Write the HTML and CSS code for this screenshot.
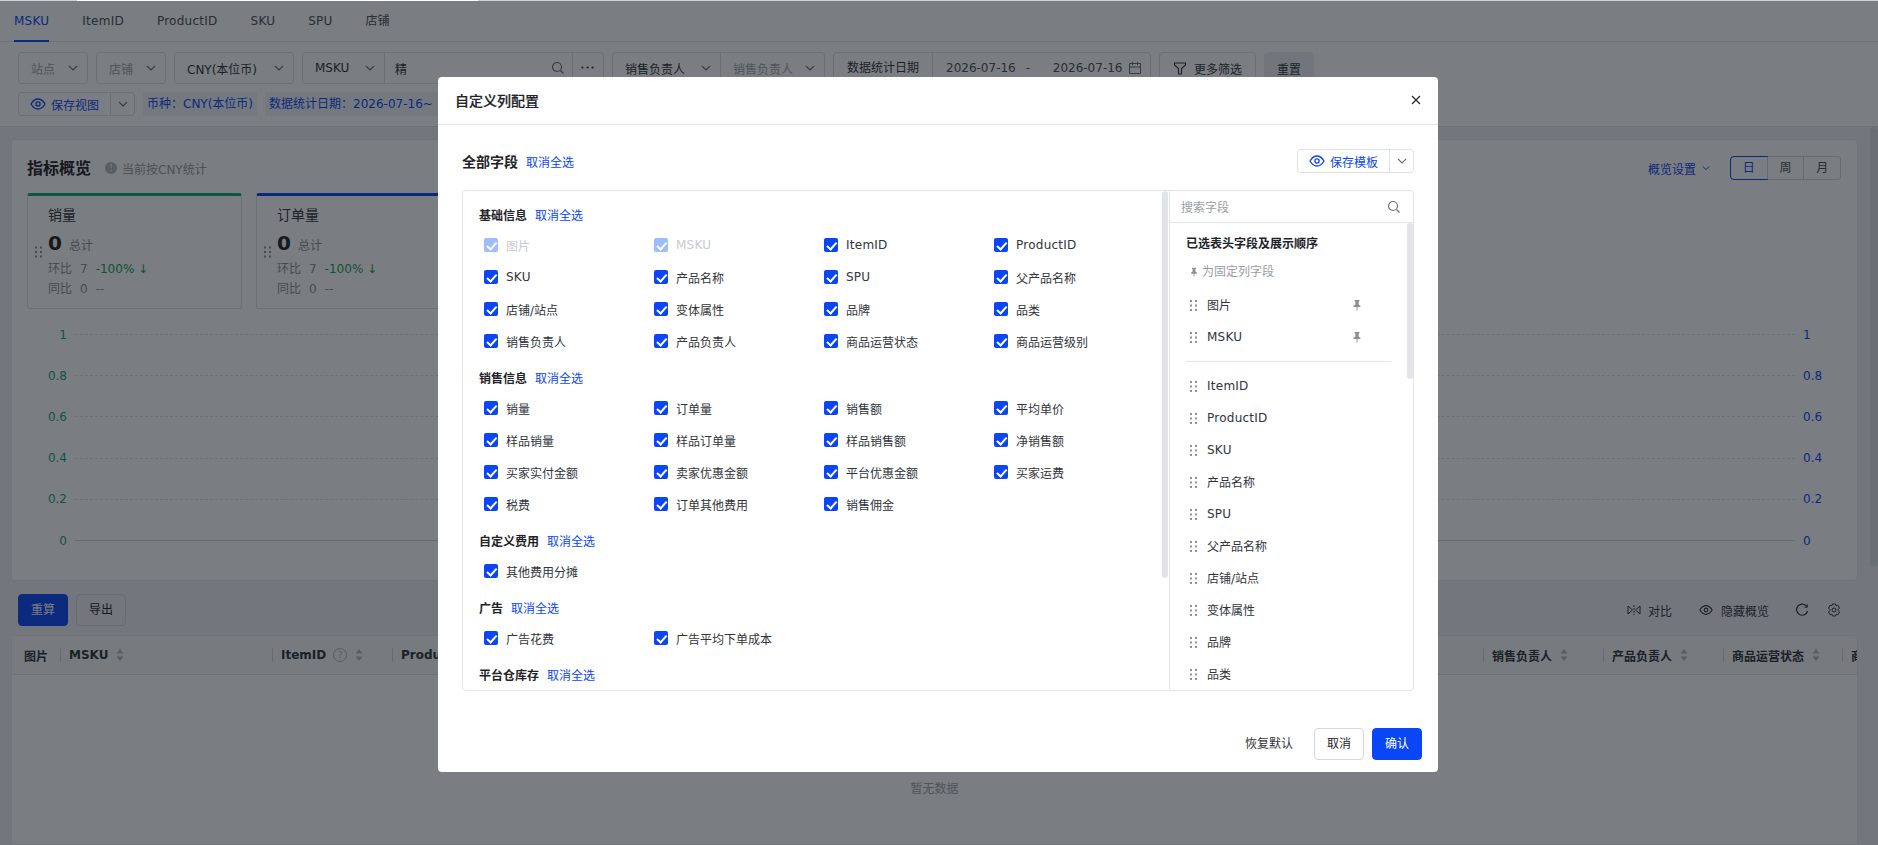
FILE: index.html
```html
<!DOCTYPE html>
<html lang="en">
<head>
  <meta charset="UTF-8" />
  <title>自定义列配置</title>
  <link rel="stylesheet" href="styles.css">
</head>
<body>
  <svg class="sprite" width="0" height="0">
    <symbol id="i-down" viewBox="0 0 12 12"><path d="M2 4l4 4 4-4" fill="none" stroke="currentColor" stroke-width="1.1"/></symbol>
    <symbol id="i-search" viewBox="0 0 14 14"><circle cx="6" cy="6" r="4.5" fill="none" stroke="currentColor" stroke-width="1.2"/><path d="M9.5 9.5l3 3" stroke="currentColor" stroke-width="1.2"/></symbol>
    <symbol id="i-eye" viewBox="0 0 16 16"><path d="M1 8c2-3.4 4.300-5 7-5s5 1.600 7 5c-2 3.400-4.300 5-7 5s-5-1.600-7-5z" fill="none" stroke="currentColor" stroke-width="1.300"/><circle cx="8" cy="8" r="2.100" fill="none" stroke="currentColor" stroke-width="1.300"/></symbol>
    <symbol id="i-pin" viewBox="0 0 12 12"><path d="M3.500 1h5v1l-.8.500v3L9.500 7v1h-3v3.500h-1V8h-3V7l1.800-1.500v-3L3.500 2z" fill="currentColor"/></symbol>
    <symbol id="i-grip" viewBox="0 0 7 11"><path d="M0 0h2v2H0zM5 0h2v2H5zM0 4.500h2v2H0zM5 4.500h2v2H5zM0 9h2v2H0zM5 9h2v2H5z" fill="currentColor"/></symbol>
    <symbol id="i-sort" viewBox="0 0 10 14"><path d="M5 1l3.500 4.500h-7zM5 13L1.500 8.500h7z" fill="currentColor"/></symbol>
    <symbol id="i-cal" viewBox="0 0 14 14"><path d="M1.500 2.500h11v10h-11zM1.500 6h11M4.500 1v3M9.500 1v3" fill="none" stroke="currentColor"/></symbol>
    <symbol id="i-filter" viewBox="0 0 14 14"><path d="M1.500 2h11v2L8.500 7.500V13h-3V7.500L1.500 4z" fill="none" stroke="currentColor" stroke-width="1.100"/></symbol>
  </svg>

  <div class="top-strip"></div>

  <div class="tabs">
    <span class="tab en active">MSKU</span>
    <span class="tab en">ItemID</span>
    <span class="tab en">ProductID</span>
    <span class="tab en">SKU</span>
    <span class="tab en">SPU</span>
    <span class="tab">店铺</span>
  </div>

  <div class="filters">
    <div class="filter-row">
      <div class="box sel w70 muted"><span>站点</span><svg class="ic"><use href="#i-down"/></svg></div>
      <div class="box sel w70 muted"><span>店铺</span><svg class="ic"><use href="#i-down"/></svg></div>
      <div class="box sel w120"><span>CNY(本位币)</span><svg class="ic"><use href="#i-down"/></svg></div>
      <div class="box group w302">
        <div class="sel part w82"><span>MSKU</span><svg class="ic"><use href="#i-down"/></svg></div>
        <div class="search-part"><span>精</span><svg class="ic14"><use href="#i-search"/></svg></div>
        <div class="more-part">•••</div>
      </div>
      <div class="box group w213">
        <div class="sel part w108"><span>销售负责人</span><svg class="ic"><use href="#i-down"/></svg></div>
        <div class="sel part fill muted"><span>销售负责人</span><svg class="ic"><use href="#i-down"/></svg></div>
      </div>
      <div class="box group w318">
        <div class="date-label">数据统计日期</div>
        <div class="date-range"><span>2026-07-16</span><span class="dash">-</span><span>2026-07-16</span><svg class="ic14"><use href="#i-cal"/></svg></div>
      </div>
      <div class="box btn w97"><svg class="ic14"><use href="#i-filter"/></svg>更多筛选</div>
      <div class="box btn w50 flat">重置</div>
    </div>
    <div class="filter-row small">
      <div class="box split w117">
        <div class="split-main"><svg class="ic16"><use href="#i-eye"/></svg>保存视图</div>
        <div class="split-arrow"><svg class="ic"><use href="#i-down"/></svg></div>
      </div>
      <span class="tag">币种：CNY(本位币)</span>
      <span class="tag">数据统计日期：2026-07-16~</span>
    </div>
  </div>

  <div class="main">
    <div class="panel">
      <div class="panel-head">
        <h2>指标概览</h2>
        <span class="info-dot">!</span>
        <span class="hint">当前按CNY统计</span>
        <span class="overview-set">概览设置<svg class="ic10"><use href="#i-down"/></svg></span>
        <div class="seg"><span class="on">日</span><span>周</span><span>月</span></div>
      </div>
      <div class="kpis">
        <div class="kpi green">
          <svg class="grip"><use href="#i-grip"/></svg>
          <div class="kpi-title">销量</div>
          <div class="kpi-val"><b>0</b>总计</div>
          <div class="kpi-line">环比<i>7</i><em>-100% ↓</em></div>
          <div class="kpi-line">同比<i>0</i><i>--</i></div>
        </div>
        <div class="kpi blue">
          <svg class="grip"><use href="#i-grip"/></svg>
          <div class="kpi-title">订单量</div>
          <div class="kpi-val"><b>0</b>总计</div>
          <div class="kpi-line">环比<i>7</i><em>-100% ↓</em></div>
          <div class="kpi-line">同比<i>0</i><i>--</i></div>
        </div>
      </div>
      <div class="chart">
        <div class="chart-row"><span class="y-l">1</span><span class="grid"></span><span class="y-r">1</span></div>
        <div class="chart-row"><span class="y-l">0.8</span><span class="grid"></span><span class="y-r">0.8</span></div>
        <div class="chart-row"><span class="y-l">0.6</span><span class="grid"></span><span class="y-r">0.6</span></div>
        <div class="chart-row"><span class="y-l">0.4</span><span class="grid"></span><span class="y-r">0.4</span></div>
        <div class="chart-row"><span class="y-l">0.2</span><span class="grid"></span><span class="y-r">0.2</span></div>
        <div class="chart-row"><span class="y-l">0</span><span class="grid solid"></span><span class="y-r">0</span></div>
      </div>
    </div>

    <div class="toolbar">
      <span class="tbtn primary">重算</span>
      <span class="tbtn">导出</span>
      <div class="tools">
        <span class="tool"><svg class="ic14" viewBox="0 0 14 14"><path d="M1 3v8l4.500-4zM13 3v8L8.500 7z" fill="none" stroke="currentColor"/><path d="M7 2v10" stroke="currentColor" stroke-dasharray="2 1"/></svg>对比</span>
        <span class="tool tool-b"><svg class="ic14"><use href="#i-eye"/></svg>隐藏概览</span>
        <svg class="ic14 tool-icon" viewBox="0 0 14 14"><path d="M12 3.800A5.600 5.600 0 1 0 12.600 8" fill="none" stroke="currentColor" stroke-width="1.200"/><path d="M12.300 1.300v2.900H9.500" fill="none" stroke="currentColor"/></svg>
        <svg class="ic14" viewBox="0 0 14 14"><path d="M5.400 1h3.200l.5 1.800 1.800-.5 1.600 2.700L11.200 6.400v1.200l1.300 1.400-1.600 2.700-1.800-.5L8.600 13H5.400l-.5-1.800-1.800.5L1.500 9l1.300-1.400V6.400L1.500 5l1.600-2.700 1.800.5z" fill="none" stroke="currentColor" stroke-linejoin="round"/><circle cx="7" cy="7" r="2" fill="none" stroke="currentColor"/></svg>
      </div>
    </div>

    <div class="table">
      <div class="thead">
        <div class="th first">图片</div>
        <div class="th w212"><span>MSKU</span><svg class="sort"><use href="#i-sort"/></svg></div>
        <div class="th w120"><span>ItemID</span><span class="help">?</span><svg class="sort"><use href="#i-sort"/></svg></div>
        <div class="th fill"><span>ProductID</span></div>
        <div class="th w120"><span>销售负责人</span><svg class="sort"><use href="#i-sort"/></svg></div>
        <div class="th w120"><span>产品负责人</span><svg class="sort"><use href="#i-sort"/></svg></div>
        <div class="th w119"><span>商品运营状态</span><svg class="sort"><use href="#i-sort"/></svg></div>
        <div class="th last"><span>商品运营级别</span></div>
      </div>
      <div class="empty">暂无数据</div>
    </div>
    <div class="page-scroll"></div>
  </div>

  <div class="overlay">
    <div class="dialog">
      <div class="dialog-head">
        <span class="dialog-title">自定义列配置</span>
        <svg class="close" viewBox="0 0 10 10"><path d="M1 1l8 8M9 1l-8 8" stroke="currentColor" stroke-width="1.100"/></svg>
      </div>
      <div class="dialog-body">
        <div class="all-row">
          <span class="all-title">全部字段</span>
          <a class="link">取消全选</a>
          <div class="tpl-btn">
            <div class="tpl-main"><svg class="ic16"><use href="#i-eye"/></svg>保存模板</div>
            <div class="tpl-arrow"><svg class="ic"><use href="#i-down"/></svg></div>
          </div>
        </div>
        <div class="config">
          <div class="fields">
            <div class="vbar left"></div>
            <div class="sec-title"><b>基础信息</b><a class="link">取消全选</a></div>
            <div class="check-grid">
              <label class="chk off"><span class="cb"></span>图片</label>
              <label class="chk off en"><span class="cb"></span>MSKU</label>
              <label class="chk en"><span class="cb"></span>ItemID</label>
              <label class="chk en"><span class="cb"></span>ProductID</label>
              <label class="chk en"><span class="cb"></span>SKU</label>
              <label class="chk"><span class="cb"></span>产品名称</label>
              <label class="chk en"><span class="cb"></span>SPU</label>
              <label class="chk"><span class="cb"></span>父产品名称</label>
              <label class="chk"><span class="cb"></span>店铺/站点</label>
              <label class="chk"><span class="cb"></span>变体属性</label>
              <label class="chk"><span class="cb"></span>品牌</label>
              <label class="chk"><span class="cb"></span>品类</label>
              <label class="chk"><span class="cb"></span>销售负责人</label>
              <label class="chk"><span class="cb"></span>产品负责人</label>
              <label class="chk"><span class="cb"></span>商品运营状态</label>
              <label class="chk"><span class="cb"></span>商品运营级别</label>
            </div>
            <div class="sec-title"><b>销售信息</b><a class="link">取消全选</a></div>
            <div class="check-grid">
              <label class="chk"><span class="cb"></span>销量</label>
              <label class="chk"><span class="cb"></span>订单量</label>
              <label class="chk"><span class="cb"></span>销售额</label>
              <label class="chk"><span class="cb"></span>平均单价</label>
              <label class="chk"><span class="cb"></span>样品销量</label>
              <label class="chk"><span class="cb"></span>样品订单量</label>
              <label class="chk"><span class="cb"></span>样品销售额</label>
              <label class="chk"><span class="cb"></span>净销售额</label>
              <label class="chk"><span class="cb"></span>买家实付金额</label>
              <label class="chk"><span class="cb"></span>卖家优惠金额</label>
              <label class="chk"><span class="cb"></span>平台优惠金额</label>
              <label class="chk"><span class="cb"></span>买家运费</label>
              <label class="chk"><span class="cb"></span>税费</label>
              <label class="chk"><span class="cb"></span>订单其他费用</label>
              <label class="chk"><span class="cb"></span>销售佣金</label>
            </div>
            <div class="sec-title"><b>自定义费用</b><a class="link">取消全选</a></div>
            <div class="check-grid">
              <label class="chk"><span class="cb"></span>其他费用分摊</label>
            </div>
            <div class="sec-title"><b>广告</b><a class="link">取消全选</a></div>
            <div class="check-grid">
              <label class="chk"><span class="cb"></span>广告花费</label>
              <label class="chk"><span class="cb"></span>广告平均下单成本</label>
            </div>
            <div class="sec-title"><b>平台仓库存</b><a class="link">取消全选</a></div>
          </div>
          <div class="picked">
            <div class="picked-search"><span>搜索字段</span><svg class="ic14"><use href="#i-search"/></svg></div>
            <div class="picked-list">
              <div class="vbar right"></div>
              <div class="picked-title">已选表头字段及展示顺序</div>
              <div class="picked-note"><svg class="ic10"><use href="#i-pin"/></svg>为固定列字段</div>
              <div class="pick-row"><svg class="grip-s"><use href="#i-grip"/></svg><span>图片</span><svg class="pin"><use href="#i-pin"/></svg></div>
              <div class="pick-row en"><svg class="grip-s"><use href="#i-grip"/></svg><span>MSKU</span><svg class="pin"><use href="#i-pin"/></svg></div>
              <div class="picked-sep"></div>
              <div class="pick-row en"><svg class="grip-s"><use href="#i-grip"/></svg><span>ItemID</span></div>
              <div class="pick-row en"><svg class="grip-s"><use href="#i-grip"/></svg><span>ProductID</span></div>
              <div class="pick-row en"><svg class="grip-s"><use href="#i-grip"/></svg><span>SKU</span></div>
              <div class="pick-row"><svg class="grip-s"><use href="#i-grip"/></svg><span>产品名称</span></div>
              <div class="pick-row en"><svg class="grip-s"><use href="#i-grip"/></svg><span>SPU</span></div>
              <div class="pick-row"><svg class="grip-s"><use href="#i-grip"/></svg><span>父产品名称</span></div>
              <div class="pick-row"><svg class="grip-s"><use href="#i-grip"/></svg><span>店铺/站点</span></div>
              <div class="pick-row"><svg class="grip-s"><use href="#i-grip"/></svg><span>变体属性</span></div>
              <div class="pick-row"><svg class="grip-s"><use href="#i-grip"/></svg><span>品牌</span></div>
              <div class="pick-row"><svg class="grip-s"><use href="#i-grip"/></svg><span>品类</span></div>
            </div>
          </div>
        </div>
      </div>
      <div class="dialog-foot">
        <span class="foot-text">恢复默认</span>
        <span class="foot-btn">取消</span>
        <span class="foot-btn ok">确认</span>
      </div>
    </div>
  </div>
</body>
</html>
```

FILE: styles.css
```css
* { box-sizing: border-box; margin: 0; padding: 0; }
html, body { height: 100%; }
body {
  font-family: "DejaVu Sans", "Noto Sans CJK SC", sans-serif;
  font-size: 12px;
  color: #1f2329;
  background: #fff;
  display: flex;
  flex-direction: column;
  height: 845px;
  overflow: hidden;
  position: relative;
}
.sprite { position: absolute; }
svg { display: block; flex-shrink: 0; }
.ic { width: 12px; height: 12px; color: #6b6f78; }
.ic10 { width: 10px; height: 10px; }
.ic14 { width: 14px; height: 14px; }
.ic16 { width: 16px; height: 16px; }
.en { letter-spacing: 0.25px; }

.top-strip {
  height: 1px;
  flex-shrink: 0;
  background: linear-gradient(90deg, #cfd1d4 77px, #fff 77px, #fff 478px, #cfd1d4 478px);
}

/* tabs */
.tabs {
  display: flex;
  gap: 33px;
  height: 41px;
  padding-left: 14px;
  border-bottom: 1px solid #e3e5ea;
  flex-shrink: 0;
}
.tab { line-height: 40px; height: 41px; color: #4c5058; }
.tab.active { color: #0a46f5; border-bottom: 2px solid #0a46f5; }

/* filters */
.filters {
  padding: 10px 18px;
  border-bottom: 1px solid #e3e5ea;
  display: flex;
  flex-direction: column;
  gap: 8px;
  flex-shrink: 0;
}
.filter-row { display: flex; gap: 8px; height: 32px; }
.filter-row.small { height: 24px; }
.box {
  border: 1px solid #dfe1e6;
  border-radius: 4px;
  display: flex;
  align-items: center;
  color: #30343b;
  flex-shrink: 0;
}
.sel { justify-content: space-between; padding: 0 8px 0 12px; }
.part { height: 100%; display: flex; align-items: center; border-right: 1px solid #dfe1e6; }
.part.fill { flex: 1; border-right: 0; }
.muted { color: #a2a5ad; }
.w50 { width: 50px; }
.w70 { width: 70px; }
.w82 { width: 82px; }
.w97 { width: 97px; }
.w108 { width: 108px; }
.w117 { width: 117px; }
.w119 { width: 119px; }
.w120 { width: 120px; }
.w212 { width: 212px; }
.w213 { width: 213px; }
.w302 { width: 302px; }
.w318 { width: 318px; }
.search-part {
  flex: 1;
  display: flex;
  align-items: center;
  justify-content: space-between;
  padding: 0 7px 0 10px;
  border-right: 1px solid #dfe1e6;
  height: 100%;
}
.search-part svg { color: #6b6f78; }
.more-part { width: 30px; text-align: center; font-size: 7px; letter-spacing: 1px; }
.date-label {
  width: 99px;
  height: 100%;
  line-height: 30px;
  text-align: center;
  border-right: 1px solid #dfe1e6;
}
.date-range {
  flex: 1;
  display: flex;
  align-items: center;
  padding: 0 8px 0 13px;
  color: #4c5058;
  white-space: nowrap;
}
.date-range .dash { width: 37px; padding-left: 10px; }
.date-range svg { margin-left: 5px; color: #6b6f78; }
.btn { justify-content: center; gap: 7px; }
.btn.flat { background: #eef0f4; border-color: #eef0f4; }
.split-main {
  flex: 1;
  display: flex;
  align-items: center;
  justify-content: center;
  gap: 5px;
  color: #0a46f5;
  border-right: 1px solid #dfe1e6;
  height: 100%;
}
.split-arrow { width: 23px; display: flex; justify-content: center; }
.tag {
  background: #f1f4fb;
  color: #0a46f5;
  line-height: 24px;
  padding: 0 4px;
  white-space: nowrap;
}

/* page body */
.main {
  flex: 1;
  background: #f0f2f7;
  padding: 12px 20px 0 11px;
  display: flex;
  flex-direction: column;
  position: relative;
  min-height: 0;
}
.panel {
  height: 442px;
  background: #fff;
  border: 1px solid #e8eaef;
  border-radius: 4px;
  padding: 16px 16px 0 15px;
  flex-shrink: 0;
}
.panel-head { display: flex; align-items: center; height: 24px; }
.panel-head h2 { font-size: 16px; font-weight: 700; padding-bottom: 2px; }
.info-dot {
  width: 12px;
  height: 12px;
  border-radius: 50%;
  background: #b5b8bf;
  color: #fff;
  font-size: 9px;
  line-height: 12px;
  text-align: center;
  margin: 0 5px 0 14px;
}
.hint { color: #9a9da5; }
.overview-set {
  margin-left: auto;
  color: #0a46f5;
  display: flex;
  align-items: center;
  gap: 5px;
}
.seg {
  display: flex;
  margin-left: 19px;
  height: 24px;
  width: 111px;
  border: 1px solid #d5d7dd;
  border-radius: 3px;
}
.seg span { flex: 1; text-align: center; line-height: 22px; border-left: 1px solid #d5d7dd; color: #4c5058; }
.seg span:first-child { border-left: 0; }
.seg .on { color: #0a46f5; outline: 1px solid #0a46f5; border-radius: 3px 0 0 3px; }

.kpis { display: flex; gap: 14px; margin-top: 13px; }
.kpi {
  width: 215px;
  height: 116px;
  background: #fff;
  border: 1px solid #e1e3e8;
  border-top-width: 3px;
  border-radius: 3px;
  padding: 9px 0 0 20px;
  position: relative;
}
.kpi.green { border-top-color: #13a67c; }
.kpi.blue { border-top-color: #0a46f5; }
.grip { position: absolute; left: 7px; top: 50px; width: 7px; height: 12px; color: #8d9098; }
.kpi-title { font-size: 14px; line-height: 20px; color: #30343b; }
.kpi-val { display: flex; align-items: baseline; height: 28px; margin-top: 4px; margin-bottom: 2px; color: #8d9098; }
.kpi-val b { font-size: 20px; line-height: 28px; color: #1f2329; margin-right: 7px; }
.kpi-line { line-height: 20px; color: #8d9098; }
.kpi-line i { font-style: normal; margin-left: 8px; }
.kpi-line em { font-style: normal; margin-left: 8px; color: #14a150; }

.chart { margin-top: 5px; }
.chart-row { display: flex; align-items: center; height: 41.2px; gap: 8px; }
.y-l { width: 40px; text-align: right; color: #13a67c; }
.y-r { width: 38px; color: #0a46f5; }
.grid { flex: 1; border-top: 1px dashed #e1e3e8; }
.grid.solid { border-top: 1px solid #d5d7dd; }

.toolbar {
  display: flex;
  align-items: center;
  gap: 8px;
  height: 32px;
  margin-top: 13px;
  padding-left: 7px;
  flex-shrink: 0;
}
.tbtn {
  width: 50px;
  height: 32px;
  line-height: 30px;
  text-align: center;
  border: 1px solid #d5d7dd;
  border-radius: 4px;
}
.tbtn.primary { background: #0a46f5; border-color: #0a46f5; color: #fff; }
.tools { margin-left: auto; display: flex; align-items: center; color: #30343b; padding-right: 17px; }
.tool { display: flex; align-items: center; gap: 7px; margin-right: 27px; }
.tool-b { gap: 8px; margin-right: 26px; }
.tool-icon { margin-right: 18px; }

.table {
  flex: 1;
  margin-top: 9px;
  background: #fff;
  border: 1px solid #e8eaef;
  border-radius: 4px 4px 0 0;
  overflow: hidden;
}
.thead {
  display: flex;
  align-items: center;
  height: 39px;
  border-bottom: 1px solid #e1e3e8;
  background: #f8f9fb;
  padding-left: 12px;
  font-weight: 700;
  color: #30343b;
}
.th {
  display: flex;
  align-items: center;
  gap: 7px;
  height: 14px;
  flex-shrink: 0;
  border-left: 1px solid #d5d7dd;
  padding-left: 8px;
  white-space: nowrap;
  overflow: hidden;
}
.th.first { width: 36px; border-left: 0; padding-left: 0; }
.th.fill { flex: 1; }
.th.last { width: 15px; }
.sort { width: 10px; height: 14px; color: #b5b8bf; }
.help {
  width: 14px;
  height: 14px;
  border: 1px solid #b5b8bf;
  border-radius: 50%;
  font-size: 9px;
  font-weight: 400;
  line-height: 12px;
  text-align: center;
  color: #b5b8bf;
}
.empty { text-align: center; color: #a2a5ad; padding-top: 104px; }
.page-scroll {
  position: absolute;
  right: 0;
  top: 0;
  width: 8px;
  height: 440px;
  background: #dcdee4;
  border-radius: 4px;
}

/* dialog */
.overlay {
  position: absolute;
  left: 0;
  right: 0;
  top: 1px;
  bottom: 0;
  background: rgba(13, 18, 26, 0.55);
  display: flex;
  justify-content: center;
  align-items: flex-start;
  padding: 76px 2px 0 0;
}
.dialog {
  width: 1000px;
  height: 695px;
  background: #fff;
  border-radius: 4px;
  display: flex;
  flex-direction: column;
}
.dialog-head {
  height: 48px;
  flex-shrink: 0;
  border-bottom: 1px solid #e3e5ea;
  display: flex;
  align-items: center;
  justify-content: space-between;
  padding: 0 17px 2px;
}
.dialog-title { font-size: 14px; font-weight: 500; -webkit-text-stroke: 0.2px #1f2329; }
.close { width: 10px; height: 10px; color: #1f2329; }
.dialog-body { flex: 1; padding: 24px 24px 0; min-height: 0; }
.all-row { display: flex; align-items: center; height: 24px; }
.all-title { font-size: 14px; font-weight: 700; margin-right: 8px; }
.link { color: #0a46f5; font-weight: 400; }
.tpl-btn {
  margin-left: auto;
  width: 117px;
  height: 24px;
  display: flex;
  align-items: center;
  border: 1px solid #dfe1e6;
  border-radius: 4px;
}
.tpl-main {
  flex: 1;
  height: 100%;
  display: flex;
  align-items: center;
  justify-content: center;
  gap: 5px;
  color: #0a46f5;
  border-right: 1px solid #dfe1e6;
}
.tpl-arrow { width: 23px; display: flex; justify-content: center; }
.config {
  display: flex;
  height: 501px;
  margin-top: 17px;
  border: 1px solid #e3e5ea;
  border-radius: 4px;
  overflow: hidden;
}
.fields {
  flex: 1;
  padding: 14px 0 0 16px;
  position: relative;
  overflow: hidden;
}
.vbar { position: absolute; width: 6px; background: #e3e4e9; border-radius: 3px; }
.vbar.left { right: 1px; top: 0; height: 387px; }
.vbar.right { right: 0; top: 0; height: 156px; }
.sec-title { display: flex; align-items: flex-start; gap: 8px; height: 20px; line-height: 22px; margin-bottom: 4px; }
.sec-title b { font-weight: 700; }
.check-grid {
  display: grid;
  grid-template-columns: repeat(4, 170px);
  grid-auto-rows: 32px;
  margin-bottom: 11px;
}
.chk { display: flex; align-items: center; gap: 8px; padding-left: 5px; color: #30343b; }
.cb {
  width: 14px;
  height: 14px;
  border-radius: 2px;
  background: #0a46f5;
  position: relative;
}
.cb::after {
  content: "";
  position: absolute;
  left: 4.500px;
  top: 2px;
  width: 4px;
  height: 7.500px;
  border: solid #fff;
  border-width: 0 2px 2px 0;
  transform: rotate(42deg);
}
.chk.off { color: #c9cbd1; }
.chk.off .cb { background: #9dbdfb; }

.picked { width: 244px; border-left: 1px solid #e3e5ea; flex-shrink: 0; display: flex; flex-direction: column; }
.picked-search {
  height: 32px;
  flex-shrink: 0;
  border-bottom: 1px solid #e3e5ea;
  display: flex;
  align-items: center;
  justify-content: space-between;
  padding: 0 12px 0 11px;
  color: #9a9da5;
}
.picked-search svg { color: #6b6f78; }
.picked-list { flex: 1; position: relative; overflow: hidden; padding: 11px 22px 0 16px; }
.picked-title { font-weight: 700; line-height: 20px; }
.picked-note {
  display: flex;
  align-items: center;
  gap: 3px;
  padding-left: 3px;
  margin: 8px 0 7px;
  line-height: 20px;
  color: #9a9da5;
}
.picked-note svg { color: #8d9098; }
.pick-row { display: flex; align-items: center; height: 32px; padding: 0 28px 0 4px; color: #30343b; }
.pick-row:not(.en) span { margin-bottom: 2px; }
.grip-s { width: 7px; height: 11px; color: #8d9098; margin-right: 10px; }
.pin { width: 12px; height: 12px; color: #8d9098; margin-left: auto; }
.picked-sep { height: 1px; background: #e3e5ea; margin: 8px 0; }

.dialog-foot {
  display: flex;
  justify-content: flex-end;
  gap: 8px;
  padding: 0 16px 12px;
  height: 81px;
  flex-shrink: 0;
  align-items: flex-end;
}
.foot-text { line-height: 32px; margin-right: 13px; color: #30343b; }
.foot-btn {
  width: 50px;
  height: 32px;
  line-height: 30px;
  text-align: center;
  border: 1px solid #d5d7dd;
  border-radius: 4px;
}
.foot-btn.ok { background: #0a46f5; border-color: #0a46f5; color: #fff; }
```
